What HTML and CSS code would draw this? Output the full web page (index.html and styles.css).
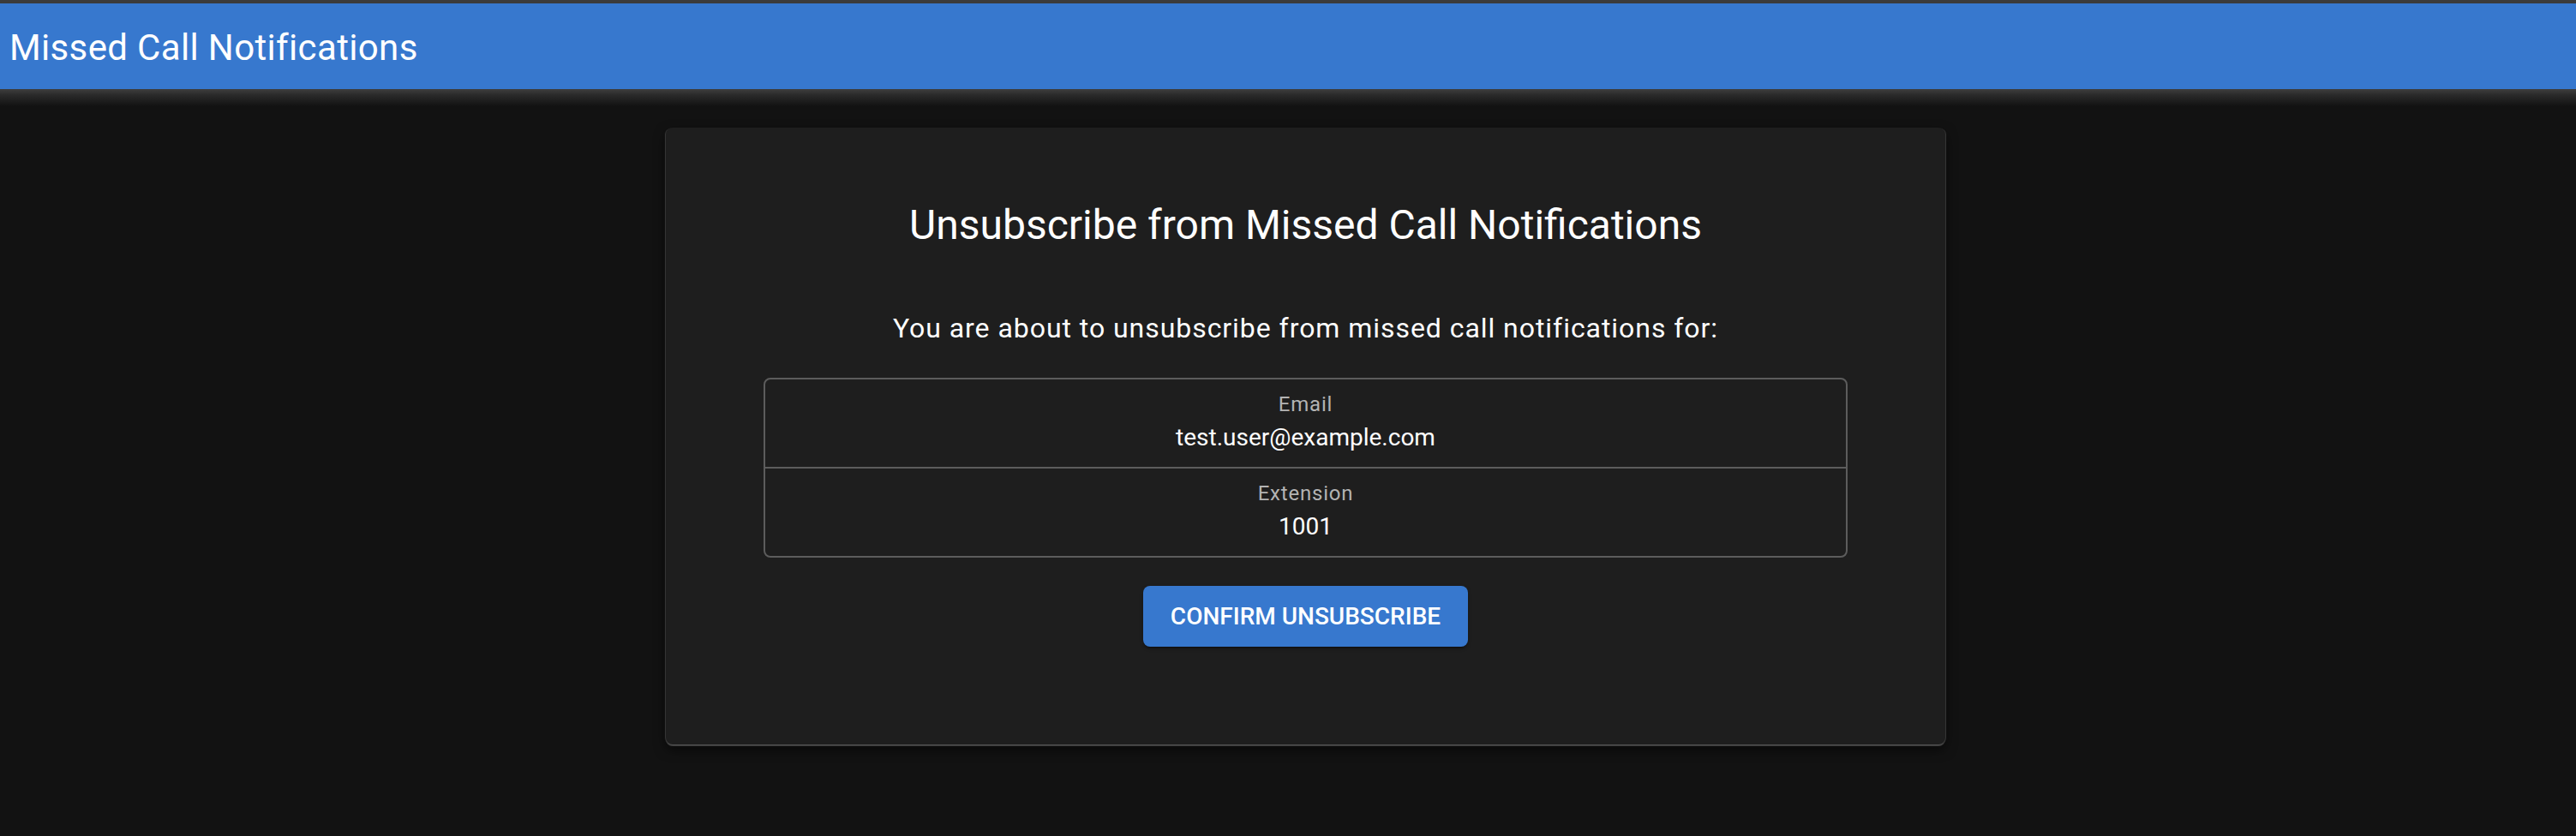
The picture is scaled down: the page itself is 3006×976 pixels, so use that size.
FILE: index.html
```html
<!DOCTYPE html>
<html lang="en">
<head>
<meta charset="utf-8">
<title>Missed Call Notifications</title>
<link rel="stylesheet" href="styles.css">
</head>
<body>
<header class="app-bar">
  <h1 class="app-title">Missed Call Notifications</h1>
</header>
<main class="page">
  <section class="card">
    <h2 class="card-title">Unsubscribe from Missed Call Notifications</h2>
    <p class="card-text">You are about to unsubscribe from missed call notifications for:</p>
    <div class="details">
      <div class="detail-row">
        <div class="detail-label">Email</div>
        <div class="detail-value">test.user@example.com</div>
      </div>
      <div class="detail-row">
        <div class="detail-label">Extension</div>
        <div class="detail-value">1001</div>
      </div>
    </div>
    <button class="confirm-btn" type="button">Confirm Unsubscribe</button>
  </section>
</main>
</body>
</html>
```
FILE: styles.css
```css
* { box-sizing: border-box; }

html, body {
  margin: 0;
  padding: 0;
  background: #121212;
  color: #ffffff;
  font-family: Roboto, "Liberation Sans", Arial, sans-serif;
}

body {
  min-height: 976px;
}

.app-bar {
  position: relative;
  height: 104px;
  border-top: 4px solid #3b3b3b;
  background: #3778ce;
  display: flex;
  align-items: center;
  padding: 0 11px;
}

.app-bar::after {
  content: "";
  position: absolute;
  left: 0;
  right: 0;
  top: 100%;
  height: 20px;
  background: linear-gradient(to bottom, #3e3e3e, #2a2a2a 35%, #121212);
}

.app-title {
  margin: 0;
  font-size: 42px;
  font-weight: 400;
  line-height: 1;
  padding-top: 4px;
  letter-spacing: 0.35px;
}

.page {
  display: flex;
  justify-content: center;
  padding: 45px 0 0 41px;
}

.card {
  width: 1493px;
  background: #1e1e1e;
  border-radius: 8px;
  padding: 82px 114px 114px;
  display: flex;
  flex-direction: column;
  align-items: center;
  box-shadow:
    -2px 0 1px -1px #3a3a3a,
    2px 0 1px -1px #3a3a3a,
    0 2px 1px 0 #4a4a4a,
    0 6px 14px rgba(0, 0, 0, 0.6);
}

.card-title {
  margin: 0 0 64px;
  font-size: 48px;
  font-weight: 400;
  line-height: 64px;
  text-align: center;
}

.card-text {
  margin: 0 0 34px;
  font-size: 32px;
  line-height: 48px;
  letter-spacing: 0.95px;
  text-align: center;
}

.details {
  width: 100%;
  border: 2px solid #5c5c5c;
  border-radius: 8px;
}

.detail-row {
  padding: 10px 16px 14px;
  text-align: center;
}

.detail-row + .detail-row {
  border-top: 2px solid #5c5c5c;
}

.detail-label {
  font-size: 24px;
  line-height: 38px;
  letter-spacing: 0.8px;
  color: #b3b3b3;
}

.detail-value {
  font-size: 28px;
  line-height: 40px;
  letter-spacing: 0;
  color: #ffffff;
}

.confirm-btn {
  margin-top: 33px;
  height: 71px;
  padding: 0 32px;
  border: none;
  border-radius: 8px;
  background: #3778ce;
  color: #ffffff;
  font-family: Roboto, "Liberation Sans", Arial, sans-serif;
  font-size: 28px;
  font-weight: 500;
  letter-spacing: 0;
  text-transform: uppercase;
  box-shadow: 0 3px 2px -2px rgba(0, 0, 0, 0.4), 0 2px 4px rgba(0, 0, 0, 0.3);
}
```
